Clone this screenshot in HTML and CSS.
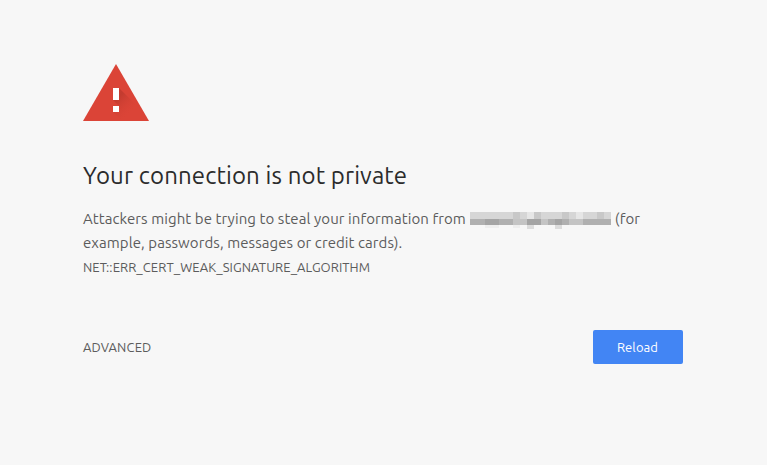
FILE: index.html
```
<!DOCTYPE html>
<html lang="en">
<head>
    <meta charset="UTF-8">
    <meta name="viewport" content="width=device-width, initial-scale=1.0">
    <title>Privacy error</title>
    <link rel="stylesheet" href="styles.css">
</head>
<body>
    <div class="interstitial">
        <svg class="icon" width="66" height="57" viewBox="0 0 66 57">
            <defs>
                <linearGradient id="shade" gradientUnits="userSpaceOnUse" x1="33" y1="36" x2="47" y2="50">
                    <stop offset="0" stop-color="#b5362b" stop-opacity=".6"/>
                    <stop offset="1" stop-color="#db4437" stop-opacity="0"/>
                </linearGradient>
            </defs>
            <path fill="#db4437" d="M33 0L66 57H0z"/>
            <path fill="url(#shade)" d="M36 24L52 40 61 57H39L30 48H36V42L30 36H36z"/>
            <path fill="#fff" d="M30 24h6v12h-6zM30 42h6v6h-6z"/>
        </svg>
        <h1>Your connection is not private</h1>
        <p>
            Attackers might be trying to steal your information from
            <svg class="redacted" width="141" height="17" viewBox="0 0 141 17" shape-rendering="crispEdges">
                <path fill="#d6d6d6" d="M0 0h141v7H0z"/>
                <path fill="#b0b0b0" d="M0 7h141v6H0z"/>
                <path fill="#c8c8c8" d="M43 0h7v7h-7zM64 0h7v7h-7zM92 0h7v7h-7zM127 0h7v7h-7z"/>
                <path fill="#e6e6e6" d="M57 0h7v7h-7zM106 0h7v7h-7z"/>
                <path fill="#a4a4a4" d="M15 7h14v6H15zM57 7h14v6H57zM85 7h7v6h-7z"/>
                <path fill="#c4c4c4" d="M43 7h14v6H43zM71 7h7v6h-7zM99 7h14v6H99z"/>
                <path fill="#eee" d="M15 13h14v3H15zM43 13h7v3h-7z"/>
                <path fill="#dcdcdc" d="M57 13h7v4h-7zM85 13h7v4h-7z"/>
            </svg>
            (for<br>
            example, passwords, messages or credit cards).
        </p>
        <div class="error-code">NET::ERR_CERT_WEAK_SIGNATURE_ALGORITHM</div>
        <div class="buttons">
            <a class="details">ADVANCED</a>
            <button class="reload">Reload</button>
        </div>
    </div>
</body>
</html>
```
FILE: styles.css
```
body{
    margin: 0;
    background-color: #f7f7f7;
    color: #5c5c5c;
    font-family: Ubuntu, "Noto Sans", sans-serif;
    font-size: 15px;
    line-height: 24px;
}
.interstitial{
    width: 600px;
    margin-left: 83px;
    padding-top: 64px;
}
.icon{
    display: block;
}
h1{
    margin: 40px 0 16px;
    color: #2b2b2b;
    font-size: 24px;
    font-weight: normal;
    line-height: 30px;
    letter-spacing: 0.12px;
}
p{
    margin: 0;
    white-space: nowrap;
    letter-spacing: 0.08px;
}
.redacted{
    margin-left: 1px;
    vertical-align: -5px;
}
.error-code{
    font-size: 13px;
    letter-spacing: 0.07px;
}
.buttons{
    display: flex;
    justify-content: space-between;
    align-items: center;
    margin-top: 51px;
}
.details{
    font-size: 13px;
    letter-spacing: 0.15px;
}
.reload{
    width: 90px;
    height: 34px;
    padding: 0 1px 0 0;
    border: none;
    border-radius: 2px;
    background-color: #4285f4;
    color: #fff;
    font-family: inherit;
    font-size: 13px;
    letter-spacing: 0.1px;
}
```
